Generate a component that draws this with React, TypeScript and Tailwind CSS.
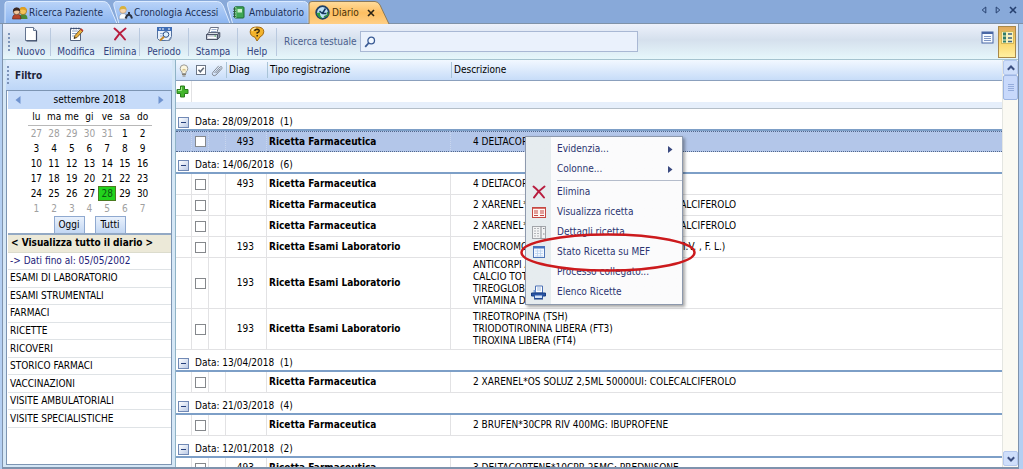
import React from "react";

type Entry = {
  diag?: string;
  kind: string;
  lines: string[];
  selected?: boolean;
};

type Group = { date: string; count: number; entries: Entry[] };

const groups: Group[] = [
  {
    date: "28/09/2018",
    count: 1,
    entries: [{ diag: "493", kind: "Ricetta Farmaceutica", lines: ["4 DELTACORTENE*10CPR 25MG"], selected: true }],
  },
  {
    date: "14/06/2018",
    count: 6,
    entries: [
      { diag: "493", kind: "Ricetta Farmaceutica", lines: ["4 DELTACORTENE*10CPR 5MG"] },
      { kind: "Ricetta Farmaceutica", lines: ["2 XARENEL*OS SOLUZ 2,5ML 50000UI: COLECALCIFEROLO"] },
      { kind: "Ricetta Farmaceutica", lines: ["2 XARENEL*OS SOLUZ 2,5ML 50000UI: COLECALCIFEROLO"] },
      { diag: "193", kind: "Ricetta Esami Laboratorio", lines: ["EMOCROMOCITOMETRICO (HB, GR, GB, HCT, M.V. , F. L.)"] },
      {
        diag: "193",
        kind: "Ricetta Esami Laboratorio",
        lines: ["ANTICORPI ANTI TIREOGLOBULINA", "CALCIO TOTALE", "TIREOGLOBULINA (TG)", "VITAMINA D"],
      },
      {
        diag: "193",
        kind: "Ricetta Esami Laboratorio",
        lines: ["TIREOTROPINA (TSH)", "TRIODOTIRONINA LIBERA (FT3)", "TIROXINA LIBERA (FT4)"],
      },
    ],
  },
  {
    date: "13/04/2018",
    count: 1,
    entries: [{ kind: "Ricetta Farmaceutica", lines: ["2 XARENEL*OS SOLUZ 2,5ML 50000UI: COLECALCIFEROLO"] }],
  },
  {
    date: "21/03/2018",
    count: 4,
    entries: [{ kind: "Ricetta Farmaceutica", lines: ["2 BRUFEN*30CPR RIV 400MG: IBUPROFENE"] }],
  },
  {
    date: "12/01/2018",
    count: 2,
    entries: [{ diag: "493", kind: "Ricetta Farmaceutica", lines: ["3 DELTACORTENE*10CPR 25MG: PREDNISONE"] }],
  },
];

const filters = [
  "ESAMI DI LABORATORIO",
  "ESAMI STRUMENTALI",
  "FARMACI",
  "RICETTE",
  "RICOVERI",
  "STORICO FARMACI",
  "VACCINAZIONI",
  "VISITE AMBULATORIALI",
  "VISITE SPECIALISTICHE",
];

const weekdays = ["lu", "ma", "me", "gi", "ve", "sa", "do"];
const weeks = [
  [27, 28, 29, 30, 31, 1, 2],
  [3, 4, 5, 6, 7, 8, 9],
  [10, 11, 12, 13, 14, 15, 16],
  [17, 18, 19, 20, 21, 22, 23],
  [24, 25, 26, 27, 28, 29, 30],
  [1, 2, 3, 4, 5, 6, 7],
];

/* ---------- icons ---------- */

const PeopleIcon = () => (
  <svg width="16" height="14" viewBox="0 0 16 14" className="shrink-0">
    <path d="M7 13 Q7 8 11 8 Q15.500 8 15.500 13 Z" fill="#4a8a3a" />
    <circle cx="11" cy="5" r="3.600" fill="#f4c35a" stroke="#9a6a1a" strokeWidth=".7" />
    <path d="M7.500 4 Q8 .6 11.500 1 Q15 1.500 14.600 5 Q12 2.500 7.500 4Z" fill="#e0a020" />
    <path d="M.5 13 Q.5 8 5 8 Q9 8 9 13 Z" fill="#b7462c" stroke="#5c2018" strokeWidth=".6" />
    <circle cx="4.600" cy="5.400" r="3.300" fill="#f0c79c" stroke="#5a3a28" strokeWidth=".7" />
    <path d="M1 6 Q.6 1.600 4.800 1.500 Q8.500 1.600 8 5.500 Q5 3.300 1 6Z" fill="#3a2620" />
  </svg>
);

const DoctorIcon = () => (
  <svg width="15" height="15" viewBox="0 0 15 15" className="shrink-0">
    <path d="M1 14 Q1 8.500 5 8.500 Q9 8.500 9 14Z" fill="#fafcff" stroke="#8f9db5" strokeWidth=".7" />
    <circle cx="5" cy="5" r="3.300" fill="#f7d5b0" stroke="#b78a62" strokeWidth=".5" />
    <path d="M1.500 5 Q1.500 1 5 1 Q8.600 1 8.400 5 Q6 2.800 1.500 5Z" fill="#d9b23c" />
    <path d="M7.500 13.500 L9 10.500 L11 9.500 L13 11 L14 13.500 M11 9.500 V7" fill="none" stroke="#2c3140" strokeWidth="2" />
  </svg>
);

const BookIcon = () => (
  <svg width="12" height="13" viewBox="0 0 12 13" className="shrink-0">
    <rect x="1.500" y=".8" width="9.500" height="11.200" rx="1" fill="#3fa655" stroke="#1d6b35" />
    <rect x="4.500" y="3" width="4.500" height="3.500" fill="#c9f0cd" />
    <path d="M2.800 1v11" stroke="#a9e0b0" />
    <path d="M0 3h3M0 5.500h3M0 8h3M0 10.500h3" stroke="#35523d" strokeWidth=".8" />
  </svg>
);

const ClockIcon = () => (
  <svg width="15" height="15" viewBox="0 0 15 15" className="shrink-0">
    <circle cx="7.500" cy="7.500" r="6.300" fill="#bfe0f5" stroke="#1f3f66" strokeWidth="1.800" />
    <path d="M1.500 8 Q3 13.500 8 13.500 Q4.500 11 5 7.500Z" fill="#2f9d3f" />
    <path d="M7.300 8.500 L10.500 3.500 M7.300 8.500 L11.500 8.500 M7.300 8.500 L4.500 6" stroke="#16385f" strokeWidth="1.500" fill="none" />
    <path d="M9 12 L13 10 L12.500 7" stroke="#3a8f40" strokeWidth="1.400" fill="none" />
  </svg>
);

const PageIcon = () => (
  <svg width="16" height="16" viewBox="0 0 16 16">
    <path d="M2.500 1.500h8l3 3v10h-11z" fill="#fff" stroke="#64748f" />
    <path d="M10.500 1.500v3h3" fill="#dbe5f2" stroke="#64748f" />
    <path d="M13.500 5v10H3.500" fill="none" stroke="#3d4a66" strokeWidth="1.200" />
  </svg>
);

const EditIcon = () => (
  <svg width="16" height="16" viewBox="0 0 16 16">
    <path d="M2.500 2.500h10v12h-10z" fill="#fff" stroke="#53627d" />
    <path d="M4 5h6M4 7.500h5M4 10h3" stroke="#8ea4c6" />
    <path d="M2.500 2.500h10" stroke="#3b4c74" strokeWidth="1.500" strokeDasharray="1.500 1" />
    <path d="M6 12.500 L7 9.500 L12.500 3.200 L14.800 5.200 L9 11.500Z" fill="#e8b040" stroke="#5f4316" strokeWidth=".8" />
    <path d="M6 12.500 L6.500 10.800 L7.800 12Z" fill="#222" />
    <path d="M12 3.500 L13.200 2.200 L15.500 4.200 L14.500 5.400Z" fill="#c0392b" />
  </svg>
);

const CrossIcon = () => (
  <svg width="14" height="14" viewBox="0 0 14 14">
    <path d="M1.500 1.500 Q6 5 12 12.500 M12.500 1.500 Q6 6 2 12.500" fill="none" stroke="#b81d3f" strokeWidth="2" strokeLinecap="round" />
  </svg>
);

const PeriodIcon = () => (
  <svg width="17" height="16" viewBox="0 0 17 16">
    <path d="M1.500 1.500h14v9l-3 4h-9l-2-2z" fill="#e9f1fc" stroke="#53719f" />
    <rect x="1" y="1" width="15" height="4" fill="#3f6db5" />
    <path d="M3 3h2M6 3h2M12 3h2" stroke="#fff" />
    <path d="M4 7.500h9M4 10h5" stroke="#94aed6" />
    <circle cx="10" cy="8.500" r="2.800" fill="#dff1ff" stroke="#2d4e84" />
    <path d="M8 10.800 L4 14.500" stroke="#c68a2a" strokeWidth="2" />
    <path d="M9.500 14.500h4l2-3" fill="none" stroke="#7086a8" />
  </svg>
);

const PrinterIcon = () => (
  <svg width="16" height="16" viewBox="0 0 16 16">
    <path d="M5.500 1.500h8l-2 6h-8z" fill="#fff" stroke="#6b7385" />
    <path d="M6.500 3.500h5M6 5.500h5" stroke="#9eb0cf" />
    <path d="M1.500 8.500 L4 6.500 H14 L12.500 8.500Z" fill="#dcdfe8" stroke="#606a7d" />
    <path d="M1.500 8.500h11v5h-11z" fill="#c8ccd8" stroke="#4b5367" />
    <path d="M12.500 8.500 L14.800 6.500 V11 L12.500 13.500Z" fill="#8d94a6" stroke="#4b5367" />
    <path d="M3 11.500h8" stroke="#fff" strokeWidth="1.500" />
    <path d="M9.500 10h1.500" stroke="#3fae49" />
  </svg>
);

const HelpIcon = () => (
  <svg width="16" height="16" viewBox="0 0 16 16">
    <path d="M8 1 Q14.800 1 14.800 5.800 Q14.800 9 11 11 L8 15 L6 11.200 Q1.200 10 1.200 5.800 Q1.200 1 8 1Z" fill="#f3b32b" stroke="#a46a10" />
    <path d="M3 5 Q3.500 2.500 7 2.200" fill="none" stroke="#fde7a6" strokeWidth="1.300" />
    <path d="M5.800 5 Q6 3.200 8.100 3.200 Q10.300 3.300 10.200 5 Q10 6.200 8.200 6.800 V7.800 M8.200 9v1.500" fill="none" stroke="#3b2a0b" strokeWidth="1.500" />
  </svg>
);

const SearchIcon = () => (
  <svg width="12" height="12" viewBox="0 0 12 12" className="shrink-0">
    <circle cx="7.200" cy="4.500" r="3.300" fill="#f2f8ff" stroke="#3a5a94" strokeWidth="1.300" />
    <path d="M4.700 7 L1.200 10.800" stroke="#3a5a94" strokeWidth="1.800" />
  </svg>
);

const ListViewIcon = () => (
  <svg width="13" height="13" viewBox="0 0 13 13">
    <rect x="1" y="1" width="11" height="11" fill="#f6faff" stroke="#4967a5" />
    <path d="M1 2h11" stroke="#4967a5" strokeWidth="2" />
    <path d="M3 5.500h7M3 7.500h7M3 9.500h7" stroke="#7d95c4" />
  </svg>
);

const CardViewIcon = () => (
  <svg width="13" height="13" viewBox="0 0 13 13">
    <rect x=".5" y=".5" width="12" height="12" fill="#f8f2bd" stroke="#d5b95a" />
    <path d="M2 1.500h3v3H2zM2 5.500h3v3H2zM2 9.500h3v2H2z" fill="#2f7d6a" />
    <path d="M7 3h4M7 7h4M7 10.500h4" stroke="#3c6480" strokeWidth="1.300" />
  </svg>
);

const BulbIcon = () => (
  <svg width="10" height="13" viewBox="0 0 10 13" className="mx-auto">
    <path d="M5 .8 Q8.800 1 8.800 4.500 Q8.800 6.500 7 8 V9.500 H3 V8 Q1.200 6.500 1.200 4.500 Q1.200 1 5 .8Z" fill="#fbf6df" stroke="#9a9a98" />
    <path d="M3 10.500h4M3.500 12h3" stroke="#857f70" />
    <path d="M4 7.500V5l1 .8L6 5v2.500" fill="none" stroke="#cdb778" strokeWidth=".8" />
  </svg>
);

const TickIcon = () => (
  <svg width="10" height="10" viewBox="0 0 10 10" className="mx-auto">
    <rect x=".5" y=".5" width="9" height="9" fill="#fff" stroke="#6c7686" />
    <path d="M2.500 4.800 L4.300 6.800 L7.800 2.700" fill="none" stroke="#5c6675" strokeWidth="1.500" />
  </svg>
);

const ClipIcon = () => (
  <svg width="13" height="13" viewBox="0 0 13 13" className="mx-auto">
    <path d="M3.500 9 L9 3 Q10.500 2 11 3.300 Q11.300 4.200 10.500 5 L5 11 Q3 12.500 1.700 11 Q.8 9.600 2 8.200 L7.800 1.800 M5.200 9.200 L9.500 4.500" fill="none" stroke="#858b96" />
  </svg>
);

const PlusIcon = () => (
  <svg width="13" height="13" viewBox="0 0 13 13" className="mx-auto">
    <path d="M4.500 1h4v3.500H12v4H8.500V12h-4V8.500H1v-4h3.500z" fill="#43b52c" stroke="#2b7c1e" />
    <path d="M5.500 2v3.500H2" fill="none" stroke="#a4e88c" />
  </svg>
);

const FormIcon = () => (
  <svg width="14" height="11" viewBox="0 0 14 11">
    <rect x=".5" y=".5" width="13" height="10" fill="#fff5f2" stroke="#c54843" />
    <path d="M1 1.500h12" stroke="#d8736c" />
    <path d="M2 4h4M8 4h4M2 6h4M8 6h4M2 8.500h4M8 8.500h4" stroke="#c54843" />
  </svg>
);

const DetailIcon = () => (
  <svg width="14" height="13" viewBox="0 0 14 13">
    <rect x=".5" y=".5" width="13" height="12" fill="#f2f3f4" stroke="#a2a5aa" />
    <path d="M2 2.500h6M2 5h6M2 7.500h6M2 10h6" stroke="#b3b6ba" strokeDasharray="2 1" />
    <path d="M9 .5v12M11 2.500h1.500M11 8h1.500" stroke="#85898f" />
  </svg>
);

const StatusIcon = () => (
  <svg width="12" height="12" viewBox="0 0 12 12">
    <rect x=".5" y=".5" width="11" height="11" fill="#f3f8ff" stroke="#4e76b8" />
    <path d="M0 1.500h12" stroke="#4272c0" strokeWidth="2" />
    <path d="M2 5h8M2 7.500h8M2 10h8M4.500 3.500v7M7.500 3.500v7" stroke="#b8cfee" strokeWidth=".8" />
  </svg>
);

const MenuPrinterIcon = () => (
  <svg width="15" height="15" viewBox="0 0 15 15">
    <path d="M4.500 1h7v7h-7z" fill="#fff" stroke="#4a70b4" />
    <path d="M6 3h4M6 5h4" stroke="#9db9e2" />
    <path d="M2.500 5h2v3h-2z" fill="#7fa2d8" />
    <path d="M.5 8h14v3H.5z" fill="#2b57a5" stroke="#173c80" />
    <path d="M3.500 10h8v3.500h-8z" fill="#d3e3f8" stroke="#2b57a5" />
    <path d="M3 14h9" stroke="#173c80" />
  </svg>
);

/* ---------- small parts ---------- */

const Grip = () => (
  <span className="flex flex-col gap-[2px]" aria-hidden="true">
    {[0, 1, 2, 3, 4].map((i) => (
      <span key={i} className="size-[2px] bg-[#7c93b8]" />
    ))}
  </span>
);

const Separator = () => <span className="h-7 w-px bg-[#b9c9df]" aria-hidden="true" />;

function ToolButton({ label, width, children }: { label: string; width: string; children: React.ReactNode }) {
  return (
    <button className={`flex h-[34px] flex-col items-center justify-between pt-px text-[#33447f] ${width}`}>
      <span className="flex h-4 items-center">{children}</span>
      <span className="leading-[14px]">{label}</span>
    </button>
  );
}

function Tab({
  label,
  width,
  shape,
  pad,
  gap,
  icon,
}: {
  label: string;
  width: string;
  shape: string;
  pad: string;
  gap: string;
  icon: React.ReactNode;
}) {
  const gradient = `tab-${label.replace(" ", "")}`;
  return (
    <button className={`relative flex h-[22px] items-center pt-px text-[#1c3158] ${width} ${pad} ${gap}`}>
      <svg
        className="absolute inset-0 h-full w-full overflow-visible"
        viewBox="0 0 120 22"
        preserveAspectRatio="none"
        aria-hidden="true"
      >
        <defs>
          <linearGradient id={gradient} x1="0" y1="0" x2="0" y2="1">
            <stop offset="0" stopColor="#b9d3f8" />
            <stop offset="1" stopColor="#8cb5f0" />
          </linearGradient>
        </defs>
        <path d={shape} fill={`url(#${gradient})`} stroke="#dcebff" vectorEffect="non-scaling-stroke" />
      </svg>
      <span className="relative flex">{icon}</span>
      <span className="relative whitespace-nowrap">{label}</span>
    </button>
  );
}

function MenuItem({ label, icon, arrow }: { label: string; icon?: React.ReactNode; arrow?: boolean }) {
  return (
    <li>
      <button role="menuitem" className="flex h-5 w-full items-center pr-[9px] text-left text-[#2b3470]">
        <span className="flex w-[25px] shrink-0 justify-center">{icon}</span>
        <span className="ml-[6px] flex-1 whitespace-nowrap">{label}</span>
        {arrow && (
          <svg width="5" height="7" viewBox="0 0 5 7" aria-hidden="true">
            <path d="M0 0 L4.500 3.500 L0 7Z" fill="#3b4a80" />
          </svg>
        )}
      </button>
    </li>
  );
}

function ContextMenu() {
  return (
    <div className="absolute top-[136px] left-[525px] w-[158px] border border-[#8d99ad] bg-[#fbfbfc] shadow-[2px_2px_3px_rgba(0,0,0,0.35)]">
      <ul role="menu" className="bg-linear-to-r from-[#e6ecef] from-[25px] to-[#fbfbfc] to-[25px] py-[2px]">
        <MenuItem label="Evidenzia..." arrow />
        <MenuItem label="Colonne..." arrow />
        <li role="separator" className="my-px ml-[31px] h-px bg-[#b4bccb]" />
        <MenuItem label="Elimina" icon={<CrossIcon />} />
        <MenuItem label="Visualizza ricetta" icon={<FormIcon />} />
        <MenuItem label="Dettagli ricetta" icon={<DetailIcon />} />
        <MenuItem label="Stato Ricetta su MEF" icon={<StatusIcon />} />
        <MenuItem label="Processo collegato..." />
        <MenuItem label="Elenco Ricette" icon={<MenuPrinterIcon />} />
      </ul>
      <svg
        className="pointer-events-none absolute top-[95px] -left-[7px]"
        width="178"
        height="41"
        viewBox="0 0 178 41"
        aria-hidden="true"
      >
        <ellipse cx="89" cy="20.500" rx="86.500" ry="18" fill="none" stroke="#cc1a1d" strokeWidth="2.500" />
      </svg>
    </div>
  );
}

function TabBar() {
  return (
    <header className="flex h-6 items-end justify-between border-b border-[#7f92a8] bg-[#88a9d9] pl-[5px]">
      <nav className="flex">
        <Tab
          label="Ricerca Paziente"
          width="w-[109px]"
          pad="pl-[7px]"
          shape="M0 22 V3 Q0 .5 3 .5 H108 Q113 .5 115 5 L123 22"
          gap="gap-px"
          icon={<PeopleIcon />}
        />
        <Tab
          label="Cronologia Accessi"
          width="w-[113px]"
          pad="pl-[4px]"
          shape="M5 22 L0 5 Q-1 .5 3 .5 H110 Q114 .5 116 5 L123 22"
          gap="gap-px"
          icon={<DoctorIcon />}
        />
        <Tab
          label="Ambulatorio"
          width="w-[82px]"
          pad="pl-[6px]"
          shape="M8 22 L1 5 Q0 .5 4 .5 H112 Q118 .5 119 5 V22"
          gap="gap-1"
          icon={<BookIcon />}
        />
        <div className="relative flex h-[22px] w-[80px] items-center pt-px pl-[6px] text-[#4a3208]">
          <svg
            className="absolute inset-0 h-full w-full overflow-visible"
            viewBox="0 0 80 22"
            preserveAspectRatio="none"
            aria-hidden="true"
          >
            <defs>
              <linearGradient id="tab-active" x1="0" y1="0" x2="0" y2="1">
                <stop offset="0" stopColor="#ffdc9c" />
                <stop offset=".5" stopColor="#fdbf62" />
                <stop offset="1" stopColor="#ffcf86" />
              </linearGradient>
            </defs>
            <path d="M0 23 V3 Q0 .5 3 .5 H66 Q69 .5 71 4 L80 23" fill="url(#tab-active)" stroke="#8a7a5c" />
          </svg>
          <button className="relative flex items-center gap-[2px]">
            <ClockIcon />
            Diario
          </button>
          <button className="relative ml-[8px]" aria-label="Chiudi scheda">
            <svg width="8" height="8" viewBox="0 0 8 8">
              <path d="M1 1 L7 7 M7 1 L1 7" stroke="#2a2214" strokeWidth="1.600" />
            </svg>
          </button>
        </div>
      </nav>
      <div className="flex h-full items-center gap-[8px] pr-[6px] pb-[3px]">
        <button aria-label="Scheda precedente">
          <svg width="6" height="8" viewBox="0 0 6 8">
            <path d="M4.800 1 L1.200 4 L4.800 7Z" fill="none" stroke="#26406f" />
          </svg>
        </button>
        <button aria-label="Scheda successiva">
          <svg width="6" height="8" viewBox="0 0 6 8">
            <path d="M1.200 1 L4.800 4 L1.200 7Z" fill="none" stroke="#26406f" />
          </svg>
        </button>
        <button aria-label="Chiudi">
          <svg width="8" height="8" viewBox="0 0 8 8">
            <path d="M1 1 L7 7 M7 1 L1 7" stroke="#26406f" strokeWidth="1.600" />
          </svg>
        </button>
      </div>
    </header>
  );
}

function Toolbar() {
  return (
    <div className="flex h-[36px] items-center justify-between border-b border-[#a5c3cf] bg-linear-to-b from-[#edf1fb] via-[#d5e0ed] via-45% to-[#e6f7fb] pr-[2px] pl-[5px]">
      <div className="flex flex-1 items-center">
        <Grip />
        <div className="ml-[2px] flex items-center">
          <ToolButton label="Nuovo" width="w-[38px]">
            <PageIcon />
          </ToolButton>
          <Separator />
          <ToolButton label="Modifica" width="w-[50px]">
            <EditIcon />
          </ToolButton>
          <ToolButton label="Elimina" width="w-[38px]">
            <CrossIcon />
          </ToolButton>
          <Separator />
          <ToolButton label="Periodo" width="w-[48px]">
            <PeriodIcon />
          </ToolButton>
          <Separator />
          <ToolButton label="Stampa" width="w-[48px]">
            <PrinterIcon />
          </ToolButton>
          <Separator />
          <ToolButton label="Help" width="w-[38px]">
            <HelpIcon />
          </ToolButton>
          <Separator />
        </div>
        <label htmlFor="search" className="ml-[7px] w-[76px] whitespace-nowrap text-[#4a5f8c]">
          Ricerca testuale
        </label>
        <div className="flex h-[21px] w-[278px] items-center border border-[#a9b8d4] bg-[#eaf1fc] pl-[3px]">
          <SearchIcon />
          <input id="search" type="text" className="ml-1 min-w-0 flex-1 bg-transparent outline-none" />
        </div>
      </div>
      <div className="flex items-center gap-[4px]">
        <button aria-label="Vista elenco" className="pb-2">
          <ListViewIcon />
        </button>
        <button
          aria-label="Vista schede"
          className="flex h-8 w-[18px] items-start justify-center border border-[#a8894a] bg-linear-to-b from-[#e0a95c] via-[#fbd568] to-[#fff0a0] pt-[4px]"
        >
          <CardViewIcon />
        </button>
      </div>
    </div>
  );
}

function Calendar() {
  return (
    <section className="bg-white">
      <div className="flex h-[18px] items-center justify-between bg-[#c6dbf9] px-[7px]">
        <button aria-label="Mese precedente">
          <svg width="6" height="8" viewBox="0 0 6 8">
            <path d="M5.500 0 L.5 4 L5.500 8Z" fill="#6f93cf" />
          </svg>
        </button>
        <span className="text-black">settembre 2018</span>
        <button aria-label="Mese successivo">
          <svg width="6" height="8" viewBox="0 0 6 8">
            <path d="M.5 0 L5.500 4 L.5 8Z" fill="#6f93cf" />
          </svg>
        </button>
      </div>
      <table className="mx-auto w-[124px] table-fixed border-separate border-spacing-0 text-center">
        <thead>
          <tr>
            {weekdays.map((d) => (
              <th key={d} className="h-[17px] border-b border-[#b8b8b8] p-0 font-normal">
                {d}
              </th>
            ))}
          </tr>
        </thead>
        <tbody>
          {weeks.map((week, w) => (
            <tr key={w}>
              {week.map((day, i) => {
                const outside = (w === 0 && day > 20) || w === 5;
                const today = w === 4 && day === 28;
                return (
                  <td
                    key={i}
                    className={
                      today
                        ? "h-[15px] border border-[#4a7a20] bg-[#22d31c] p-0 leading-[12px] text-[#0d5a10]"
                        : outside
                          ? "h-[15px] p-0 leading-[12px] text-[#a0a0a0]"
                          : "h-[15px] p-0 leading-[12px] text-black"
                    }
                  >
                    {day}
                  </td>
                );
              })}
            </tr>
          ))}
        </tbody>
      </table>
      <div className="flex justify-center gap-[10px]">
        <button className="h-[17px] w-[31px] border border-b-0 border-[#8fa9d0] bg-linear-to-b from-[#e9f1fc] to-[#c3d7f3]">
          Oggi
        </button>
        <button className="h-[17px] w-[31px] border border-b-0 border-[#8fa9d0] bg-linear-to-b from-[#e9f1fc] to-[#c3d7f3]">
          Tutti
        </button>
      </div>
    </section>
  );
}

function Sidebar() {
  return (
    <aside className="flex w-[166px] shrink-0 flex-col pb-[2px]">
      <div className="flex h-[30px] items-center gap-[6px] bg-linear-to-b from-[#e2eefd] to-[#bdd6f7] pl-px">
        <Grip />
        <h2 className="pt-[2px] font-bold text-[#1b2238]">Filtro</h2>
      </div>
      <div className="flex min-h-0 flex-1 flex-col border border-[#7d95b3] bg-white pl-px">
        <Calendar />
        <ul className="grid h-[195px] grid-rows-11 border-t-2 border-[#93a9c4]">
          <li className="flex items-center border-b border-[#dcdccd] bg-[#ece9d8] pl-[3px] font-bold whitespace-nowrap">
            &lt; Visualizza tutto il diario &gt;
          </li>
          <li className="flex items-center border-b border-[#dfe3e6] pl-[2px] text-[#1c2178]">-&gt; Dati fino al: 05/05/2002</li>
          {filters.map((f) => (
            <li key={f} className="flex items-center border-b border-[#dfe3e6] pl-[2px] whitespace-nowrap">
              {f}
            </li>
          ))}
        </ul>
      </div>
    </aside>
  );
}

function EntryRow({ entry, id }: { entry: Entry; id: string }) {
  const cell = entry.selected
    ? "h-[21px] border-y border-dotted border-y-[#51678c] p-0"
    : "h-[21px] border-b border-[#e2e2e4] p-0";
  const side = entry.selected ? "border-r border-r-[#c9d6ee]" : "border-r border-r-[#e2e2e4]";
  const pad = entry.lines.length > 3 ? "py-px" : entry.lines.length > 1 ? "py-[2px]" : "";
  return (
    <tr className={entry.selected ? "bg-[#b3c6e9]" : "bg-white"}>
      <td className={`${cell} ${side}`} />
      <td className={`${cell} ${side}`}>
        <input
          type="checkbox"
          aria-label={`Seleziona ${id}`}
          className="mx-auto block size-[11px] appearance-none border border-[#85888c] bg-white"
        />
      </td>
      <td className={`${cell} ${side}`} />
      <td className={`${cell} ${side}`}>
        <span className="block pr-[12px] text-right">{entry.diag}</span>
      </td>
      <td className={`${cell} ${side}`}>
        <span className="block pl-[2px] font-bold whitespace-nowrap">{entry.kind}</span>
      </td>
      <td className={cell}>
        <span className={`block pl-[22px] leading-[12px] whitespace-nowrap ${pad}`}>
          {entry.lines.map((line) => (
            <span key={line} className="block">
              {line}
            </span>
          ))}
        </span>
      </td>
    </tr>
  );
}

function Diary() {
  const head = "h-[21px] border-b border-[#8ba0bd] p-0 text-left font-normal";
  const label = "block border-l border-[#a9c4d8] pl-[2px] leading-[16px]";
  return (
    <main className="flex min-w-0 flex-1 border-l border-[#8fb3c6] bg-white">
      <div className="min-w-0 flex-1 overflow-hidden">
        <table className="w-full table-fixed border-separate border-spacing-0">
          <colgroup>
            <col className="w-[16px]" />
            <col className="w-[17px]" />
            <col className="w-[17px]" />
            <col className="w-[41px]" />
            <col className="w-[184px]" />
            <col />
          </colgroup>
          <thead>
            <tr className="bg-linear-to-b from-[#f2f8ff] to-[#c5dbf8]">
              <th className={head} aria-label="Evidenza">
                <BulbIcon />
              </th>
              <th className={head} aria-label="Selezione">
                <TickIcon />
              </th>
              <th className={head} aria-label="Allegati">
                <ClipIcon />
              </th>
              <th className={head}>
                <span className={label}>Diag</span>
              </th>
              <th className={head}>
                <span className={label}>Tipo registrazione</span>
              </th>
              <th className={head}>
                <span className={label}>Descrizione</span>
              </th>
            </tr>
          </thead>
          <tbody>
            <tr>
              <td className="h-[21px] border-r border-[#e2e2e4] p-0">
                <button aria-label="Aggiungi" className="block">
                  <PlusIcon />
                </button>
              </td>
              <td colSpan={5} />
            </tr>
            <tr>
              <td colSpan={6} className="h-[7px] border-b border-[#b4bec8] bg-[#e6effb] p-0" />
            </tr>
          </tbody>
          {groups.map((g) => (
            <tbody key={g.date}>
              <tr>
                <th
                  colSpan={6}
                  className="h-[22px] border-b-2 border-[#7d9fc7] p-0 text-left align-bottom font-normal"
                >
                  <span className="flex items-center gap-[6px] pl-[2px]">
                    <button
                      aria-label="Comprimi"
                      className="flex size-[11px] items-center justify-center border border-[#7189b5] bg-linear-to-br from-white to-[#bccbe6]"
                    >
                      <span className="h-px w-[5px] bg-[#26407c]" />
                    </button>
                    <span className="leading-[14px] whitespace-pre">{`Data: ${g.date}  (${g.count})`}</span>
                  </span>
                </th>
              </tr>
              {g.entries.map((e, i) => (
                <EntryRow key={i} entry={e} id={`${g.date} ${i + 1}`} />
              ))}
            </tbody>
          ))}
        </table>
      </div>
      <div className="flex w-4 shrink-0 flex-col justify-between border-l border-[#e4e6e2] bg-[#fbfaf3]" aria-hidden="true">
        <div>
          <div className="flex h-[15px] items-center justify-center rounded-xs border border-[#b4c8ee] bg-[#cfdffb]">
            <svg width="8" height="6" viewBox="0 0 8 6">
              <path d="M.8 4.800 L4 1.500 L7.200 4.800" fill="none" stroke="#3c4f80" strokeWidth="2" />
            </svg>
          </div>
          <div className="flex h-[25px] flex-col items-center justify-center gap-px rounded-xs border border-[#9db5e2] bg-[#c8d9fb]">
            {[0, 1, 2, 3].map((i) => (
              <span key={i} className="h-px w-[6px] bg-[#94acdc]" />
            ))}
          </div>
        </div>
        <div className="mb-px flex h-[15px] items-center justify-center rounded-xs border border-[#b4c8ee] bg-[#cfdffb]">
          <svg width="8" height="6" viewBox="0 0 8 6">
            <path d="M.8 1.200 L4 4.500 L7.200 1.200" fill="none" stroke="#3c4f80" strokeWidth="2" />
          </svg>
        </div>
      </div>
    </main>
  );
}

export default function App() {
  return (
    <div className="relative flex h-screen flex-col overflow-hidden bg-[#b4cff2] font-['DejaVu_Sans_Condensed','Noto_Sans',sans-serif] text-[10px] leading-[14px] text-black">
      <TabBar />
      <div className="mr-[4px] ml-[2px] flex min-h-0 flex-1 flex-col border-x border-b-2 border-[#7f93ad] bg-[#d5e7f6]">
        <Toolbar />
        <div className="flex min-h-0 flex-1 gap-[3px] pl-[3px]">
          <Sidebar />
          <Diary />
        </div>
      </div>
      <ContextMenu />
    </div>
  );
}
